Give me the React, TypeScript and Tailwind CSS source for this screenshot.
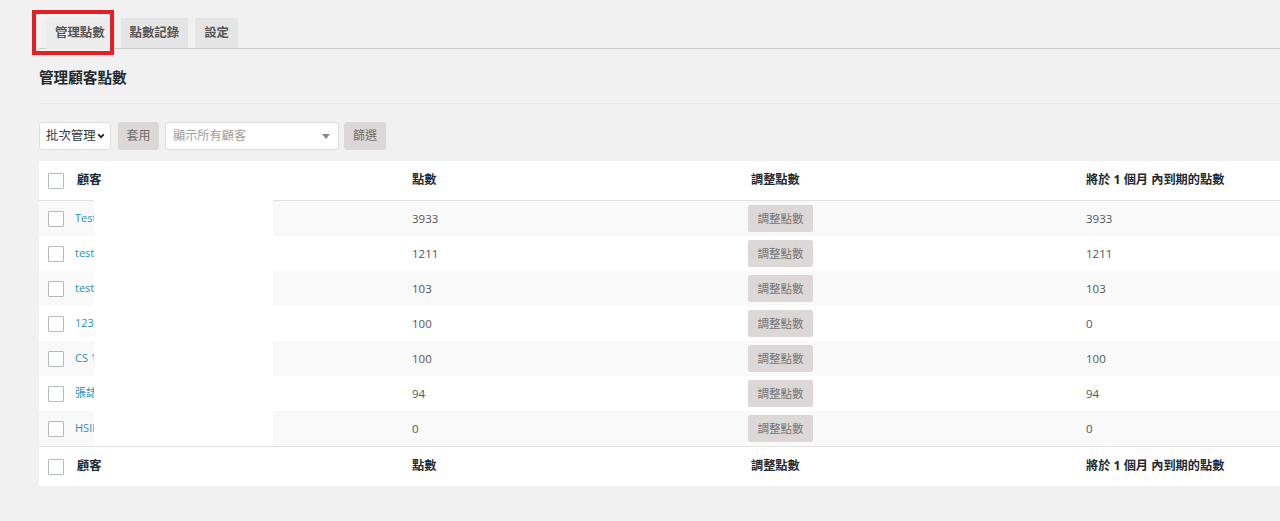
import React from 'react';

type Row = { name: string; points: number; expiring: number };

const rows: Row[] = [
  { name: 'Test', points: 3933, expiring: 3933 },
  { name: 'test', points: 1211, expiring: 1211 },
  { name: 'test', points: 103, expiring: 103 },
  { name: '123', points: 100, expiring: 0 },
  { name: 'CS 1', points: 100, expiring: 100 },
  { name: '張誌', points: 94, expiring: 94 },
  { name: 'HSIE', points: 0, expiring: 0 },
];

const cols = 'grid grid-cols-[29px_335px_339px_335px_1fr]';

const Checkbox: React.FC = () => (
  <span className="block w-[16px] h-[16px] bg-white border border-[#b4b9be] rounded-[1px]" />
);

const HeaderRow: React.FC<{ top?: boolean }> = ({ top }) => (
  <div
    className={`${cols} h-[40px] items-center text-[12.2px] font-bold text-[#23282d] ${
      top ? 'border-b border-[#e1e1e1]' : 'border-t border-[#e1e1e1]'
    }`}
  >
    <div className="pl-[9px]">
      <Checkbox />
    </div>
    <div className="pl-[9px]">顧客</div>
    <div className="pl-[9px]">點數</div>
    <div className="pl-[9px]">調整點數</div>
    <div className="pl-[9px]">將於 1 個月 內到期的點數</div>
  </div>
);

const App: React.FC = () => {
  return (
    <div
      className="relative w-full h-[521px] overflow-hidden bg-[#f1f1f1]"
      style={{ fontFamily: '"Open Sans", "Noto Sans CJK TC", sans-serif' }}
    >
      <div className="pl-[39px] pt-[18px]">
        {/* tabs */}
        <div className="flex items-end gap-[7px] pl-[7px] h-[31px] border-b border-[#cccccc]">
          <div className="px-[9px] h-[31px] -mb-px leading-[30px] text-[12.4px] font-semibold text-[#555] bg-[#ececec] border-b border-[#ececec]">
            管理點數
          </div>
          <div className="px-[9px] h-[30px] leading-[30px] text-[12.4px] font-semibold text-[#555] bg-[#e5e5e5]">
            點數記錄
          </div>
          <div className="px-[9px] h-[30px] leading-[30px] text-[12.4px] font-semibold text-[#555] bg-[#e5e5e5]">
            設定
          </div>
        </div>

        <div className="border-b border-[#e6e6e6] pt-[18px] pb-[16px]">
          <h1 className="text-[14.6px] leading-[20px] font-bold text-[#23282d]">管理顧客點數</h1>
        </div>

        {/* controls */}
        <div className="flex items-center mt-[18px] h-[28px]">
          <div className="flex items-center h-[28px] w-[72px] pl-[6px] pr-[5px] bg-white border border-[#dddddd] rounded-[3px] text-[12.4px] text-[#32373c]">
            <span>批次管理</span>
            <svg className="ml-auto" width="8" height="6" viewBox="0 0 10 7">
              <path d="M1.5 1.5 5 5l3.5-3.5" fill="none" stroke="#222" strokeWidth="2.2" />
            </svg>
          </div>
          <button className="ml-[7px] h-[28px] w-[41px] bg-[#ddd8d8] rounded-[3px] text-[12px] text-[#6d6d6d]">
            套用
          </button>
          <div className="ml-[6px] flex items-center h-[28px] w-[174px] pl-[7px] pr-[8px] bg-white border border-[#dddddd] rounded-[3px] text-[12.2px] text-[#a0a0a0]">
            <span>顯示所有顧客</span>
            <span className="ml-auto w-0 h-0 border-l-[4px] border-r-[4px] border-t-[5px] border-l-transparent border-r-transparent border-t-[#888]" />
          </div>
          <button className="ml-[5px] h-[28px] w-[42px] bg-[#ddd8d8] rounded-[3px] text-[12px] text-[#6d6d6d]">
            篩選
          </button>
        </div>

        {/* table */}
        <div className="mt-[11px] w-[1400px] bg-white">
          <HeaderRow top />
          {rows.map((r, i) => (
            <div
              key={i}
              className={`${cols} h-[35px] items-center text-[11.5px] text-[#555] ${
                i % 2 === 0 ? 'bg-[#f9f9f9]' : 'bg-white'
              }`}
            >
              <div className="pl-[9px]">
                <Checkbox />
              </div>
              <div className="pl-[7px] text-[11px] text-[#2a8fc4]">{r.name}</div>
              <div className="pl-[9px]">{r.points}</div>
              <div className="pl-[6px]">
                <button className="h-[27px] w-[65px] bg-[#ddd8d8] rounded-[2px] text-[11.5px] text-[#757575]">
                  調整點數
                </button>
              </div>
              <div className="pl-[9px]">{r.expiring}</div>
            </div>
          ))}
          <HeaderRow />
        </div>
      </div>

      {/* redaction overlay */}
      <div className="absolute left-[94px] top-[200px] w-[179px] h-[246px] bg-white" />

      {/* annotation box */}
      <div className="absolute left-[32px] top-[10px] w-[82px] h-[45px] border-[4px] border-[#e31e24]" />
    </div>
  );
};

export default App;
